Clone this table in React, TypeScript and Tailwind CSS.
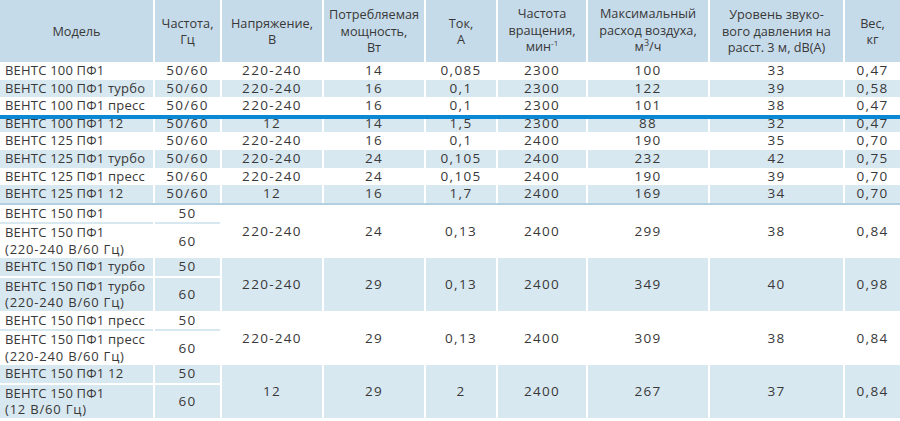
import React from 'react';

const grid =
  'grid grid-cols-[153px_65px_100px_100px_70px_88px_120px_133px_55px] gap-x-[2px]';

type Row = string[];

const simpleRows: Row[] = [
  ['ВЕНТС 100 ПФ1', '50/60', '220-240', '14', '0,085', '2300', '100', '33', '0,47'],
  ['ВЕНТС 100 ПФ1 турбо', '50/60', '220-240', '16', '0,1', '2300', '122', '39', '0,58'],
  ['ВЕНТС 100 ПФ1 пресс', '50/60', '220-240', '16', '0,1', '2300', '101', '38', '0,47'],
  ['ВЕНТС 100 ПФ1 12', '50/60', '12', '14', '1,5', '2300', '88', '32', '0,47'],
  ['ВЕНТС 125 ПФ1', '50/60', '220-240', '16', '0,1', '2400', '190', '35', '0,70'],
  ['ВЕНТС 125 ПФ1 турбо', '50/60', '220-240', '24', '0,105', '2400', '232', '42', '0,75'],
  ['ВЕНТС 125 ПФ1 пресс', '50/60', '220-240', '24', '0,105', '2400', '190', '39', '0,70'],
  ['ВЕНТС 125 ПФ1 12', '50/60', '12', '16', '1,7', '2400', '169', '34', '0,70'],
];

interface Group {
  first: string;
  second: string[];
  values: string[];
}

const groups: Group[] = [
  {
    first: 'ВЕНТС 150 ПФ1',
    second: ['ВЕНТС 150 ПФ1', '(220-240 В/60 Гц)'],
    values: ['220-240', '24', '0,13', '2400', '299', '38', '0,84'],
  },
  {
    first: 'ВЕНТС 150 ПФ1 турбо',
    second: ['ВЕНТС 150 ПФ1 турбо', '(220-240 В/60 Гц)'],
    values: ['220-240', '29', '0,13', '2400', '349', '40', '0,98'],
  },
  {
    first: 'ВЕНТС 150 ПФ1 пресс',
    second: ['ВЕНТС 150 ПФ1 пресс', '(220-240 В/60 Гц)'],
    values: ['220-240', '29', '0,13', '2400', '309', '38', '0,84'],
  },
  {
    first: 'ВЕНТС 150 ПФ1 12',
    second: ['ВЕНТС 150 ПФ1', '(12 В/60 Гц)'],
    values: ['12', '29', '2', '2400', '267', '37', '0,84'],
  },
];

// numeric cells are set a bit wider, as in the printed catalogue
const num = 'text-[13.5px] tracking-[1.3px]';

const HeadCell: React.FC<{ children: React.ReactNode }> = ({ children }) => (
  <div className="bg-[#c6dbea] flex items-center justify-center text-center">
    <div className="leading-[16.5px]">{children}</div>
  </div>
);

const Header: React.FC = () => (
  <div className={`${grid} h-[62px] text-[12.7px]`}>
    <HeadCell>Модель</HeadCell>
    <HeadCell>
      Частота,
      <br />
      Гц
    </HeadCell>
    <HeadCell>
      Напряжение,
      <br />В
    </HeadCell>
    <HeadCell>
      Потребляемая
      <br />
      мощность,
      <br />
      Вт
    </HeadCell>
    <HeadCell>
      Ток,
      <br />А
    </HeadCell>
    <HeadCell>
      Частота
      <br />
      вращения,
      <br />
      мин<span className="relative -top-[5px] text-[8px]">-1</span>
    </HeadCell>
    <HeadCell>
      Максимальный
      <br />
      расход воздуха,
      <br />
      м<span className="relative -top-[5px] text-[9px]">3</span>/ч
    </HeadCell>
    <HeadCell>
      Уровень звуко-
      <br />
      вого давления на
      <br />
      расст. 3 м, dB(A)
    </HeadCell>
    <HeadCell>
      Вес,
      <br />
      кг
    </HeadCell>
  </div>
);

const SimpleRow: React.FC<{ row: Row; blue: boolean }> = ({ row, blue }) => {
  const bg = blue ? 'bg-[#d8e8f1]' : 'bg-white';
  return (
    <div className={`${grid} h-[17.6px] leading-[17.6px]`}>
      {row.map((v, i) => (
        <div
          key={i}
          className={`${bg} overflow-hidden whitespace-nowrap ${
            i === 0 ? 'pl-[5px] tracking-[0.2px]' : `text-center ${num}`
          }`}
        >
          {v}
        </div>
      ))}
    </div>
  );
};

const GroupRow: React.FC<{ g: Group; blue: boolean }> = ({ g, blue }) => {
  const bg = blue ? 'bg-[#d8e8f1]' : 'bg-white';
  const sep = blue ? 'bg-white' : 'bg-[#d8e8f1]';
  return (
    <div className={`${grid} grid-rows-[17.5px_2px_33px] mb-[1px]`}>
      <div className={`${bg} col-start-1 row-start-1 pl-[5px] leading-[17.5px] whitespace-nowrap tracking-[0.2px]`}>
        {g.first}
      </div>
      <div className={`${bg} col-start-2 row-start-1 text-center leading-[17.5px] ${num}`}>50</div>
      <div className={`${sep} col-start-1 row-start-2`} />
      <div className={`${sep} col-start-2 row-start-2`} />
      <div
        className={`${bg} col-start-1 row-start-3 pl-[5px] leading-[16.5px] whitespace-nowrap flex flex-col justify-center tracking-[0.2px]`}
      >
        <span>{g.second[0]}</span>
        <span className="tracking-[0.8px]">{g.second[1]}</span>
      </div>
      <div className={`${bg} col-start-2 row-start-3 flex items-center justify-center ${num}`}>60</div>
      {g.values.map((v, i) => (
        <div
          key={i}
          className={`${bg} row-span-3 row-start-1 flex items-center justify-center ${num}`}
          style={{ gridColumnStart: i + 3 }}
        >
          {v}
        </div>
      ))}
    </div>
  );
};

export default function App() {
  return (
    <div
      className="w-[900px] h-[421px] bg-white text-[#383838] overflow-hidden"
      style={{ fontFamily: '"Open Sans", "Noto Sans", sans-serif' }}
    >
      <div className="relative text-[13px]">
        <Header />
        {simpleRows.map((r, i) => (
          <SimpleRow key={i} row={r} blue={i % 2 === 1} />
        ))}
        <div className="h-[2px] bg-[#b3cfe2]" />
        {groups.map((g, i) => (
          <GroupRow key={i} g={g} blue={i % 2 === 1} />
        ))}
        <div className="absolute left-0 right-0 top-[115px] h-[3.5px] bg-[#0a88d3]" />
      </div>
    </div>
  );
}
